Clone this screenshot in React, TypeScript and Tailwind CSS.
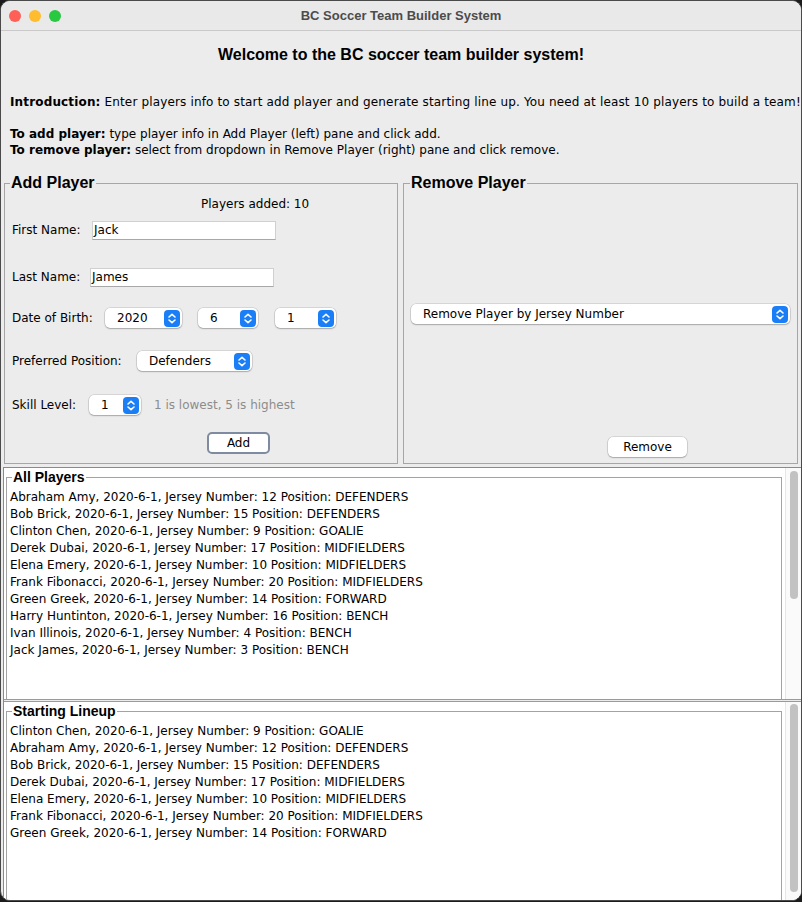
import React from "react";

const allPlayers = [
  "Abraham Amy, 2020-6-1, Jersey Number: 12 Position: DEFENDERS",
  "Bob Brick, 2020-6-1, Jersey Number: 15 Position: DEFENDERS",
  "Clinton Chen, 2020-6-1, Jersey Number: 9 Position: GOALIE",
  "Derek Dubai, 2020-6-1, Jersey Number: 17 Position: MIDFIELDERS",
  "Elena Emery, 2020-6-1, Jersey Number: 10 Position: MIDFIELDERS",
  "Frank Fibonacci, 2020-6-1, Jersey Number: 20 Position: MIDFIELDERS",
  "Green Greek, 2020-6-1, Jersey Number: 14 Position: FORWARD",
  "Harry Huntinton, 2020-6-1, Jersey Number: 16 Position: BENCH",
  "Ivan Illinois, 2020-6-1, Jersey Number: 4 Position: BENCH",
  "Jack James, 2020-6-1, Jersey Number: 3 Position: BENCH",
];

const lineup = [
  "Clinton Chen, 2020-6-1, Jersey Number: 9 Position: GOALIE",
  "Abraham Amy, 2020-6-1, Jersey Number: 12 Position: DEFENDERS",
  "Bob Brick, 2020-6-1, Jersey Number: 15 Position: DEFENDERS",
  "Derek Dubai, 2020-6-1, Jersey Number: 17 Position: MIDFIELDERS",
  "Elena Emery, 2020-6-1, Jersey Number: 10 Position: MIDFIELDERS",
  "Frank Fibonacci, 2020-6-1, Jersey Number: 20 Position: MIDFIELDERS",
  "Green Greek, 2020-6-1, Jersey Number: 14 Position: FORWARD",
];

function Stepper() {
  return (
    <svg width="16" height="17" viewBox="0 0 16 17" className="shrink-0">
      <rect width="16" height="17" rx="4" fill="#1a7ef6" />
      <path
        d="M5 7 L8 4.3 L11 7 M5 10 L8 12.7 L11 10"
        stroke="white"
        strokeWidth="1.6"
        fill="none"
        strokeLinecap="round"
        strokeLinejoin="round"
      />
    </svg>
  );
}

interface ComboProps {
  value: string;
  className: string;
}

function Combo({ value, className }: ComboProps) {
  return (
    <div
      className={
        "h-[20px] rounded-[5px] bg-white flex items-center justify-between pl-[12px] pr-[2px] shadow-[0_0_0_0.5px_rgba(0,0,0,0.18),0_1px_1.5px_rgba(0,0,0,0.22)] " +
        className
      }
    >
      <span>{value}</span>
      <Stepper />
    </div>
  );
}

function TextField({ value, className }: { value: string; className: string }) {
  return (
    <div
      className={
        "h-[19px] bg-white border border-[#d0d0d0] border-b-[#a8a8a8] pl-[1px] flex items-center " +
        className
      }
    >
      {value}
    </div>
  );
}

function ListPane({
  title,
  rows,
  thumbClass,
}: {
  title: string;
  rows: string[];
  thumbClass: string;
}) {
  return (
    <div className="flex-1 flex bg-white overflow-hidden min-h-0">
      <div className="flex-1 overflow-hidden pl-[2px] pr-[3px]">
        <fieldset className="border border-[#a3a3a3] h-[400px] mt-[1px]">
          <legend className="ml-[5px] px-[1px] font-['Liberation_Sans',Arial,sans-serif] font-bold text-[14px] leading-[16px]">
            {title}
          </legend>
          <div className="pl-[3px] pt-[4px]">
            {rows.map((r) => (
              <div key={r} className="h-[17px] leading-[17px] whitespace-nowrap">
                {r}
              </div>
            ))}
          </div>
        </fieldset>
      </div>
      <div className="w-[16px] border-l border-[#e6e6e6] bg-[#fafafa] flex justify-center">
        <div className={"w-[8px] rounded-full bg-[#c2c2c2] " + thumbClass} />
      </div>
    </div>
  );
}

export default function App() {
  return (
    <div className="w-[802px] h-[902px] bg-[#1c1c1c] overflow-hidden font-['DejaVu_Sans',sans-serif] text-[12px] text-black">
      <div className="h-[901px] flex flex-col bg-[#ececec] border border-[#4a4a4a] rounded-[10px] overflow-hidden">
        {/* title bar */}
        <div className="h-[30px] shrink-0 flex items-center border-b border-[#c9c9c9] bg-[#e9e9e9]">
          <div className="flex gap-[8px] pl-[8px]">
            <span className="w-[12px] h-[12px] rounded-full bg-[#fe5f57]" />
            <span className="w-[12px] h-[12px] rounded-full bg-[#febc2e]" />
            <span className="w-[12px] h-[12px] rounded-full bg-[#28c840]" />
          </div>
          <div className="flex-1 text-center pr-[60px] font-['Liberation_Sans',Arial,sans-serif] font-bold text-[13px] text-[#4c4c4c]">
            BC Soccer Team Builder System
          </div>
        </div>

        {/* intro */}
        <div className="shrink-0">
          <div className="mt-[14px] h-[20px] leading-[20px] text-center font-['Liberation_Sans',Arial,sans-serif] font-bold text-[16px]">
            Welcome to the BC soccer team builder system!
          </div>
          <p className="mt-[29px] pl-[9px] leading-[16px] whitespace-nowrap tracking-[0.15px]">
            <b>Introduction:</b> Enter players info to start add player and generate starting line up. You
            need at least 10 players to build a team!
          </p>
          <p className="mt-[16px] pl-[9px] leading-[16px]">
            <b>To add player:</b> type player info in Add Player (left) pane and click add.
          </p>
          <p className="pl-[9px] leading-[16px]">
            <b>To remove player:</b> select from dropdown in Remove Player (right) pane and click remove.
          </p>
        </div>

        {/* panes */}
        <div className="mt-[16px] h-[293px] shrink-0 flex gap-[5px] pl-[3px]">
          <fieldset className="w-[394px] h-[290px] border border-[#a6a6a6]">
            <legend className="ml-[5px] px-[1px] font-['Liberation_Sans',Arial,sans-serif] font-bold text-[16px] leading-[18px]">
              Add Player
            </legend>
            <div className="pl-[7px] flex flex-col">
              <div className="mt-[2px] h-[20px] flex items-center ml-[189px]">Players added: 10</div>
              <div className="mt-[6px] h-[20px] flex items-center">
                <span className="w-[80px]">First Name:</span>
                <TextField value="Jack" className="w-[184px]" />
              </div>
              <div className="mt-[27px] h-[20px] flex items-center">
                <span className="w-[78px]">Last Name:</span>
                <TextField value="James" className="w-[184px]" />
              </div>
              <div className="mt-[21px] h-[20px] flex items-center">
                <span className="w-[93px]">Date of Birth:</span>
                <Combo value="2020" className="w-[77px]" />
                <Combo value="6" className="w-[60px] ml-[16px]" />
                <Combo value="1" className="w-[61px] ml-[17px]" />
              </div>
              <div className="mt-[23px] h-[20px] flex items-center">
                <span className="w-[125px]">Preferred Position:</span>
                <Combo value="Defenders" className="w-[115px]" />
              </div>
              <div className="mt-[24px] h-[20px] flex items-center">
                <span className="w-[77px]">Skill Level:</span>
                <Combo value="1" className="w-[52px]" />
                <span className="ml-[13px] text-[#8c8c8c]">1 is lowest, 5 is highest</span>
              </div>
              <div className="mt-[17px] ml-[195px] w-[63px] h-[22px] rounded-[5px] border-[2.5px] border-[#7f8ba0] bg-white flex items-center justify-center">
                Add
              </div>
            </div>
          </fieldset>

          <fieldset className="w-[395px] h-[290px] border border-[#a6a6a6]">
            <legend className="ml-[6px] px-[1px] font-['Liberation_Sans',Arial,sans-serif] font-bold text-[16px] leading-[18px]">
              Remove Player
            </legend>
            <div className="pl-[7px] pr-[7px] flex flex-col">
              <div className="mt-[112px]">
                <Combo value="Remove Player by Jersey Number" className="w-[379px] pr-[1px]" />
              </div>
              <div className="mt-[113px] ml-[197px] w-[79px] h-[20px] rounded-[5px] bg-white flex items-center justify-center shadow-[0_0_0_0.5px_rgba(0,0,0,0.18),0_1px_1.5px_rgba(0,0,0,0.22)]">
                Remove
              </div>
            </div>
          </fieldset>
        </div>

        {/* lists */}
        <div className="flex-1 flex flex-col ml-[2px] border-t border-l border-[#8a8a8a] min-h-0">
          <div className="h-[231px] flex shrink-0">
            <ListPane title="All Players" rows={allPlayers} thumbClass="mt-[3px] h-[128px]" />
          </div>
          <div className="h-[3px] shrink-0 border-y border-[#9a9a9a] bg-[#ececec]" />
          <div className="flex-1 flex min-h-0">
            <ListPane title="Starting Lineup" rows={lineup} thumbClass="mt-[2px] h-[188px]" />
          </div>
        </div>
      </div>
    </div>
  );
}
